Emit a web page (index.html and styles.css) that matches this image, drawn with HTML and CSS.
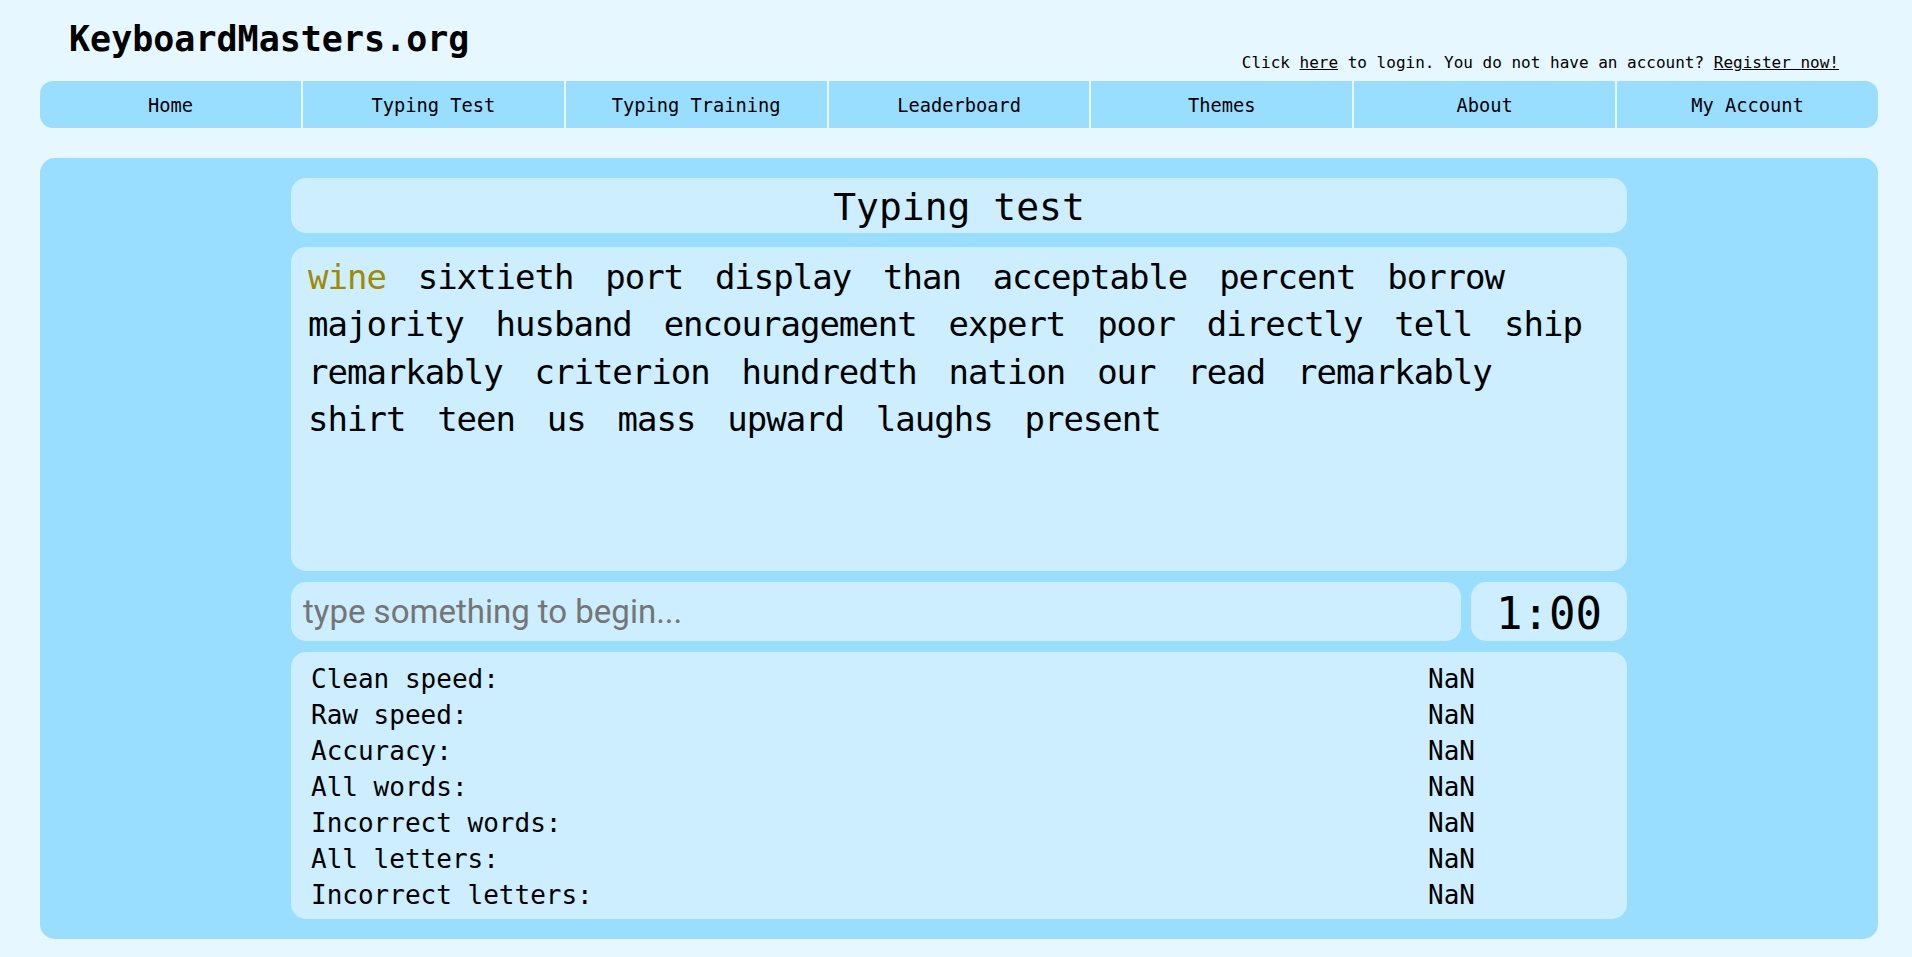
FILE: index.html
```html
<!DOCTYPE html>
<html lang="en">
<head>
<meta charset="utf-8">
<title>KeyboardMasters.org - Typing test</title>
<link rel="stylesheet" href="styles.css">
</head>
<body>
<div class="page">
  <header class="header">
    <div class="brand">KeyboardMasters.org</div>
    <div class="login">Click <a href="#">here</a> to login. You do not have an account? <a href="#">Register now!</a></div>
  </header>
  <nav class="nav">
    <a class="nav-item" href="#">Home</a>
    <a class="nav-item" href="#">Typing Test</a>
    <a class="nav-item" href="#">Typing Training</a>
    <a class="nav-item" href="#">Leaderboard</a>
    <a class="nav-item" href="#">Themes</a>
    <a class="nav-item" href="#">About</a>
    <a class="nav-item" href="#">My Account</a>
  </nav>
  <main class="panel">
    <div class="column">
      <div class="title-box">Typing test</div>
      <div class="words"><span class="word current">wine</span> <span class="word">sixtieth</span> <span class="word">port</span> <span class="word">display</span> <span class="word">than</span> <span class="word">acceptable</span> <span class="word">percent</span> <span class="word">borrow</span> <span class="word">majority</span> <span class="word">husband</span> <span class="word">encouragement</span> <span class="word">expert</span> <span class="word">poor</span> <span class="word">directly</span> <span class="word">tell</span> <span class="word">ship</span> <span class="word">remarkably</span> <span class="word">criterion</span> <span class="word">hundredth</span> <span class="word">nation</span> <span class="word">our</span> <span class="word">read</span> <span class="word">remarkably</span> <span class="word">shirt</span> <span class="word">teen</span> <span class="word">us</span> <span class="word">mass</span> <span class="word">upward</span> <span class="word">laughs</span> <span class="word">present</span></div>
      <div class="input-row">
        <input class="type-input" type="text" placeholder="type something to begin...">
        <div class="timer">1:00</div>
      </div>
      <div class="stats">
        <div class="label">Clean speed:</div><div class="value">NaN</div>
        <div class="label">Raw speed:</div><div class="value">NaN</div>
        <div class="label">Accuracy:</div><div class="value">NaN</div>
        <div class="label">All words:</div><div class="value">NaN</div>
        <div class="label">Incorrect words:</div><div class="value">NaN</div>
        <div class="label">All letters:</div><div class="value">NaN</div>
        <div class="label">Incorrect letters:</div><div class="value">NaN</div>
      </div>
    </div>
  </main>
</div>
</body>
</html>
```

FILE: styles.css
```css
html, body {
  margin: 0;
  padding: 0;
  background: #e6f7ff;
}

body {
  font-family: "DejaVu Sans Mono", "Liberation Mono", monospace;
  color: #000;
}

.page {
  padding: 0 34px 0 40px;
}

.header {
  display: flex;
  justify-content: space-between;
  height: 81px;
}

.brand {
  margin: 19px 0 0 29px;
  font-size: 35px;
  font-weight: bold;
  line-height: normal;
}

.login {
  align-self: flex-end;
  margin: 0 39px 9px 0;
  font-size: 16px;
  line-height: normal;
}

.login a {
  color: #000;
  text-decoration: underline;
}

.nav {
  display: flex;
  height: 47px;
  background: #99ddff;
  border-radius: 13px;
  overflow: hidden;
}

.nav-item {
  flex: 1 1 0;
  display: flex;
  align-items: center;
  justify-content: center;
  box-sizing: border-box;
  padding-top: 2px;
  font-size: 18.7px;
  color: #000;
  text-decoration: none;
  border-left: 2px solid #e6f7ff;
}

.nav-item:first-child {
  border-left: none;
}

.panel {
  margin-top: 30px;
  padding: 20px 0;
  background: #99ddff;
  border-radius: 15px;
}

.column {
  width: 1336px;
  margin: 0 auto;
  display: flex;
  flex-direction: column;
}

.title-box {
  box-sizing: border-box;
  height: 55px;
  padding-top: 3px;
  line-height: 52px;
  text-align: center;
  font-size: 38px;
  background: #cceeff;
  border-radius: 15px;
  margin-bottom: 14px;
}

.words {
  box-sizing: border-box;
  height: 324px;
  padding: 6.5px 17px 0 17px;
  font-size: 34px;
  line-height: 47.6px;
  word-spacing: 11.3px;
  background: #cceeff;
  border-radius: 15px;
  margin-bottom: 11px;
}

.word {
  letter-spacing: -1px;
}

.current {
  color: #a08b00;
}

.input-row {
  display: flex;
  gap: 10px;
  height: 59px;
  margin-bottom: 11px;
}

.type-input {
  flex: 1 1 auto;
  min-width: 0;
  box-sizing: border-box;
  height: 59px;
  margin: 0;
  padding: 0 12px;
  border: none;
  outline: none;
  background: #cceeff;
  border-radius: 15px;
  font-family: Roboto, "Liberation Sans", sans-serif;
  font-size: 33px;
  color: #000;
}

.type-input::placeholder {
  color: #757575;
}

.timer {
  box-sizing: border-box;
  width: 156px;
  flex: 0 0 156px;
  padding-top: 4px;
  line-height: 55px;
  text-align: center;
  font-size: 44px;
  background: #cceeff;
  border-radius: 15px;
}

.stats {
  display: grid;
  grid-template-columns: 1fr 199px;
  padding: 9px 0 6px 20px;
  font-size: 26px;
  line-height: 36px;
  background: #cceeff;
  border-radius: 15px;
}
```
